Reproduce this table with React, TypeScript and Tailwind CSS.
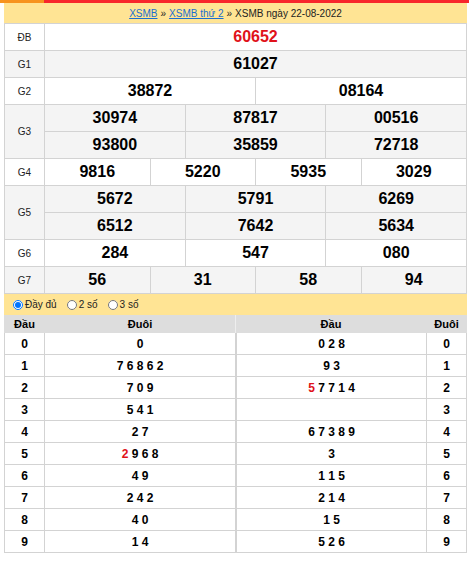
import React from "react";

const B = "border-[#d3d3d3]";

function Label({ text, h = "h-[27px]" }: { text: string; h?: string }) {
  return (
    <div className={`w-[40px] shrink-0 ${h} border-r border-b ${B} flex items-center justify-center text-[10px] text-[#222]`}>
      {text}
    </div>
  );
}

function Cells({ nums, red = false }: { nums: string[]; red?: boolean }) {
  return (
    <div className="flex h-[27px]">
      {nums.map((n, i) => (
        <div
          key={i}
          className={`flex-1 basis-0 border-r border-b ${B} flex items-center justify-center text-[16px] font-bold ${red ? "text-[#e0121a]" : "text-black"}`}
        >
          {n}
        </div>
      ))}
    </div>
  );
}

function Row({ label, rows, bg, red }: { label: string; rows: string[][]; bg: string; red?: boolean }) {
  return (
    <div className={`flex ${bg}`}>
      <Label text={label} h={rows.length === 2 ? "h-[54px]" : "h-[27px]"} />
      <div className="flex-1 flex flex-col">
        {rows.map((r, i) => (
          <Cells key={i} nums={r} red={red} />
        ))}
      </div>
    </div>
  );
}

type Part = { t: string; red?: boolean };
const left: Part[][] = [
  [{ t: "0" }],
  [{ t: "7 6 8 6 2" }],
  [{ t: "7 0 9" }],
  [{ t: "5 4 1" }],
  [{ t: "2 7" }],
  [{ t: "2", red: true }, { t: " 9 6 8" }],
  [{ t: "4 9" }],
  [{ t: "2 4 2" }],
  [{ t: "4 0" }],
  [{ t: "1 4" }],
];
const right: Part[][] = [
  [{ t: "0 2 8" }],
  [{ t: "9 3" }],
  [{ t: "5", red: true }, { t: " 7 7 1 4" }],
  [],
  [{ t: "6 7 3 8 9" }],
  [{ t: "3" }],
  [{ t: "1 1 5" }],
  [{ t: "2 1 4" }],
  [{ t: "1 5" }],
  [{ t: "5 2 6" }],
];

function Parts({ p }: { p: Part[] }) {
  return (
    <span className="whitespace-pre">
      {p.map((x, i) => (
        <span key={i} className={x.red ? "text-[#e0121a]" : "text-black"}>
          {x.t}
        </span>
      ))}
    </span>
  );
}

export default function App() {
  return (
    <div className="w-[469px] h-[562px] bg-white overflow-hidden" style={{ fontFamily: '"Liberation Sans", Arial, sans-serif' }}>
      <div className="flex h-[3px]">
        <div className="w-[44px] bg-[#f7931e]" />
        <div className="flex-1 bg-[#f8262b]" />
      </div>
      <div className="ml-[4px] w-[463px]">
        <div className="h-[20px] bg-[#ffe494] flex items-center justify-center text-[10px] text-[#222]">
          <a className="text-[#1a6fd0] underline">XSMB</a>
          <span className="mx-[3px]">»</span>
          <a className="text-[#1a6fd0] underline">XSMB thứ 2</a>
          <span className="mx-[3px]">»</span>
          <span>XSMB ngày 22-08-2022</span>
        </div>
        <div className={`border-l border-t ${B}`}>
          <Row label="ĐB" rows={[["60652"]]} bg="bg-white" red />
          <Row label="G1" rows={[["61027"]]} bg="bg-[#f4f4f4]" />
          <Row label="G2" rows={[["38872", "08164"]]} bg="bg-white" />
          <Row label="G3" rows={[["30974", "87817", "00516"], ["93800", "35859", "72718"]]} bg="bg-[#f4f4f4]" />
          <Row label="G4" rows={[["9816", "5220", "5935", "3029"]]} bg="bg-white" />
          <Row label="G5" rows={[["5672", "5791", "6269"], ["6512", "7642", "5634"]]} bg="bg-[#f4f4f4]" />
          <Row label="G6" rows={[["284", "547", "080"]]} bg="bg-white" />
          <Row label="G7" rows={[["56", "31", "58", "94"]]} bg="bg-[#f4f4f4]" />
        </div>
        <div className="h-[21px] bg-[#ffe494] flex items-center pl-[9px] text-[10px] text-[#222]">
          <label className="flex items-center gap-[2px]">
            <input type="radio" name="m" defaultChecked className="w-[10px] h-[10px] m-0" />
            <span>Đầy đủ</span>
          </label>
          <label className="flex items-center gap-[2px] ml-[10px]">
            <input type="radio" name="m" className="w-[10px] h-[10px] m-0" />
            <span>2 số</span>
          </label>
          <label className="flex items-center gap-[2px] ml-[10px]">
            <input type="radio" name="m" className="w-[10px] h-[10px] m-0" />
            <span>3 số</span>
          </label>
        </div>
        <div className="flex">
          <div className="w-[232px]">
            <div className="h-[18px] bg-[#dddddd] flex text-[11px] font-bold text-black border-r border-[#eeeeee]">
              <div className="w-[41px] flex items-center justify-center">Đầu</div>
              <div className="flex-1 flex items-center justify-center">Đuôi</div>
            </div>
            {left.map((p, i) => (
              <div key={i} className={`flex h-[22px] border-l border-r border-b ${B} text-[12px] font-bold`}>
                <div className={`w-[40px] border-r ${B} flex items-center justify-center`}>{i}</div>
                <div className="flex-1 flex items-center justify-center">
                  <Parts p={p} />
                </div>
              </div>
            ))}
          </div>
          <div className="w-[231px]">
            <div className="h-[18px] bg-[#dddddd] flex text-[11px] font-bold text-black">
              <div className="flex-1 flex items-center justify-center">Đầu</div>
              <div className="w-[41px] flex items-center justify-center">Đuôi</div>
            </div>
            {right.map((p, i) => (
              <div key={i} className={`flex h-[22px] border-l border-r border-b ${B} text-[12px] font-bold`}>
                <div className={`flex-1 border-r ${B} flex items-center justify-center`}>
                  <Parts p={p} />
                </div>
                <div className="w-[39px] flex items-center justify-center">{i}</div>
              </div>
            ))}
          </div>
        </div>
      </div>
    </div>
  );
}
